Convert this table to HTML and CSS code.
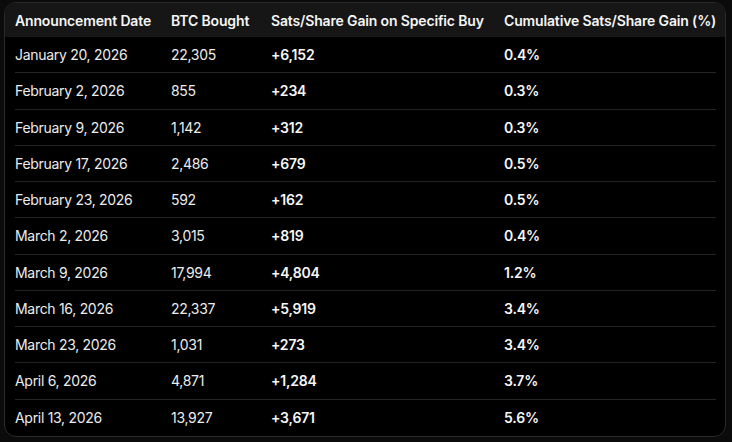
FILE: index.html
```html
<!DOCTYPE html>
<html lang="en">
<head>
<meta charset="utf-8">
<title>BTC Purchases</title>
<link rel="stylesheet" href="styles.css">
</head>
<body>
<div class="wrap">
  <div class="row head">
    <div>Announcement Date</div>
    <div>BTC Bought</div>
    <div>Sats/Share Gain on Specific Buy</div>
    <div>Cumulative Sats/Share Gain (%)</div>
  </div>
  <div class="row"><div>January 20, 2026</div><div>22,305</div><div class="b">+6,152</div><div class="b">0.4%</div></div>
  <div class="row"><div>February 2, 2026</div><div>855</div><div class="b">+234</div><div class="b">0.3%</div></div>
  <div class="row"><div>February 9, 2026</div><div>1,142</div><div class="b">+312</div><div class="b">0.3%</div></div>
  <div class="row"><div>February 17, 2026</div><div>2,486</div><div class="b">+679</div><div class="b">0.5%</div></div>
  <div class="row"><div>February 23, 2026</div><div>592</div><div class="b">+162</div><div class="b">0.5%</div></div>
  <div class="row"><div>March 2, 2026</div><div>3,015</div><div class="b">+819</div><div class="b">0.4%</div></div>
  <div class="row"><div>March 9, 2026</div><div>17,994</div><div class="b">+4,804</div><div class="b">1.2%</div></div>
  <div class="row"><div>March 16, 2026</div><div>22,337</div><div class="b">+5,919</div><div class="b">3.4%</div></div>
  <div class="row"><div>March 23, 2026</div><div>1,031</div><div class="b">+273</div><div class="b">3.4%</div></div>
  <div class="row"><div>April 6, 2026</div><div>4,871</div><div class="b">+1,284</div><div class="b">3.7%</div></div>
  <div class="row"><div>April 13, 2026</div><div>13,927</div><div class="b">+3,671</div><div class="b">5.6%</div></div>
</div>
</body>
</html>
```
FILE: styles.css
```css
html, body {
  margin: 0;
  padding: 0;
  background: #0b0b0b;
}
body {
  padding: 2px 0 0 4px;
  font-family: Inter, "Noto Sans", sans-serif;
  font-size: 14px;
  color: #ececec;
}
.wrap {
  box-sizing: border-box;
  width: 722px;
  height: 435px;
  border: 1px solid #2a2a2a;
  border-radius: 12px;
  background: #000;
  overflow: hidden;
}
.row {
  display: grid;
  grid-template-columns: 156px 100px 233px 1fr;
  align-items: center;
  box-sizing: border-box;
  height: 36.25px;
  margin: 0 9px 0 10px;
  border-bottom: 1px solid #242424;
  white-space: nowrap;
  letter-spacing: -0.3px;
}
.row:last-child {
  border-bottom: none;
}
.row.head {
  height: 34px;
  margin: 0;
  padding: 0 9px 0 10px;
  background: #161616;
  border-bottom: none;
  font-weight: 600;
  color: #f5f5f5;
  letter-spacing: -0.15px;
}
.b {
  font-weight: 600;
  color: #f7f7f7;
  letter-spacing: -0.2px;
}
```
